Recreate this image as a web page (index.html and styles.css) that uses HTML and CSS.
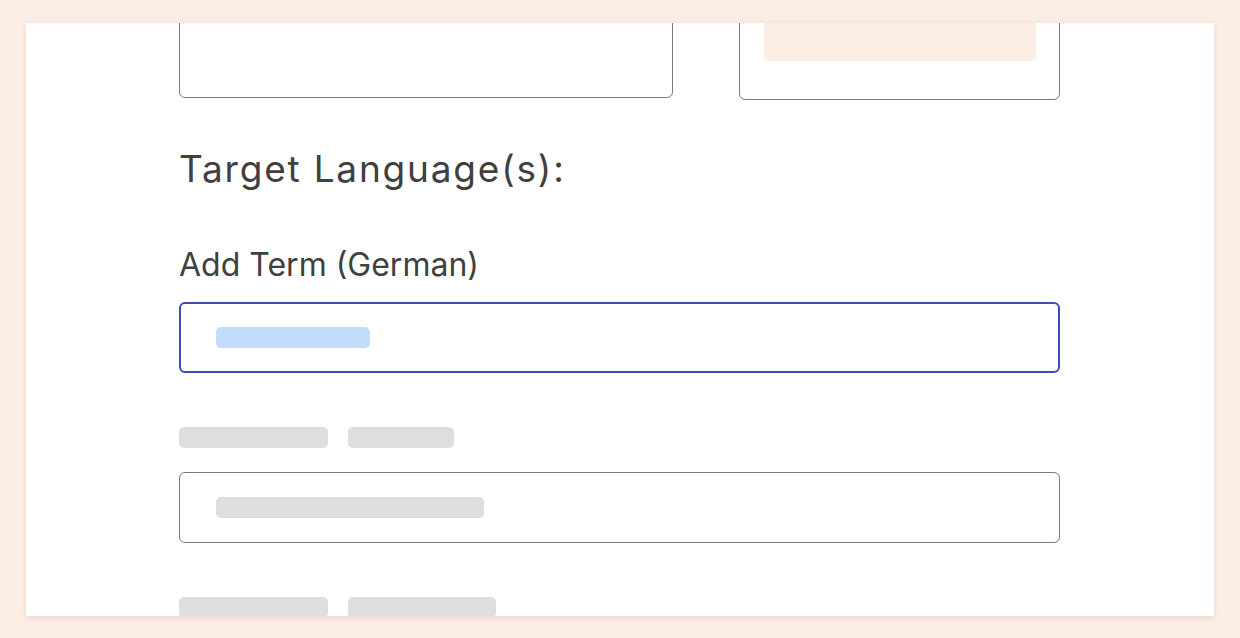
FILE: index.html
```html
<!DOCTYPE html>
<html lang="en">
<head>
<meta charset="utf-8">
<title>Glossary term</title>
<link rel="stylesheet" href="styles.css">
</head>
<body>
<main class="card">
  <div class="content">
    <div class="top-row">
      <div class="box-left"></div>
      <div class="box-right"><div class="peach-bar"></div></div>
    </div>
    <h2 class="heading">Target Language(s):</h2>
    <label class="label">Add Term (German)</label>
    <div class="field field-focus"><span class="sk sk-blue"></span></div>
    <div class="sk-row"><span class="sk sk-label-a"></span><span class="sk sk-label-b"></span></div>
    <div class="field"><span class="sk sk-grey sk-wide"></span></div>
    <div class="sk-row"><span class="sk sk-label-a"></span><span class="sk sk-label-c"></span></div>
  </div>
</main>
</body>
</html>
```
FILE: styles.css
```css
* { box-sizing: border-box; }
html, body { margin: 0; height: 100%; }
body {
  background: #fdeee5;
  padding: 23px 26px 22px;
  font-family: Inter, "Open Sans", sans-serif;
  color: #404040;
}
.card {
  background: #fff;
  height: 593px;
  overflow: hidden;
  box-shadow: 0 2px 6px rgba(120, 90, 70, 0.18);
}
.content {
  margin-left: 153px;
  width: 881px;
}
.top-row {
  display: flex;
  gap: 66px;
  align-items: flex-start;
  margin-top: -97px;
}
.box-left {
  width: 494px;
  height: 172px;
  border: 1px solid #7a7a7a;
  border-radius: 6px;
}
.box-right {
  width: 321px;
  height: 174px;
  border: 1px solid #7a7a7a;
  border-radius: 6px;
  display: flex;
  flex-direction: column;
  justify-content: flex-end;
  padding: 0 23px 38px 24px;
}
.peach-bar {
  height: 60px;
  background: #fdeee5;
  border-radius: 4px;
}
.heading {
  margin: 45px 0 0;
  font-size: 37px;
  font-weight: 400;
  line-height: 48px;
  letter-spacing: 1.8px;
}
.label {
  display: block;
  margin-top: 54px;
  font-size: 32px;
  line-height: 36px;
  letter-spacing: 0;
}
.field {
  margin-top: 19px;
  height: 71px;
  border: 1px solid #7a7a7a;
  border-radius: 6px;
  display: flex;
  align-items: center;
  padding-left: 36px;
}
.field-focus {
  border: 2px solid #3f4bb8;
  padding-left: 35px;
}
.sk {
  display: block;
  height: 21px;
  border-radius: 5px;
}
.sk-blue { width: 154px; background: #c2dcfb; }
.sk-grey { background: #dedede; }
.sk-wide { width: 268px; }
.sk-row {
  display: flex;
  gap: 20px;
  margin-top: 54px;
}
.sk-row + .field { margin-top: 24px; }
.sk-label-a { width: 149px; background: #dedede; }
.sk-label-b { width: 106px; background: #dedede; }
.sk-label-c { width: 148px; background: #dedede; }
```
